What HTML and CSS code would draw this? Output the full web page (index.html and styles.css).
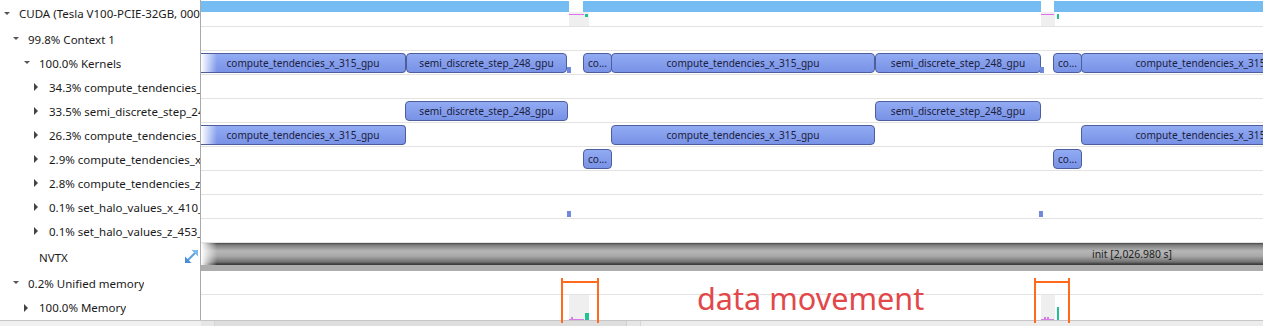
FILE: index.html
```html
<!DOCTYPE html>
<html lang="en">
<head>
    <meta charset="UTF-8">
    <meta name="viewport" content="width=device-width, initial-scale=1.0">
    <title>Timeline View</title>
    <link rel="stylesheet" href="styles.css">
</head>
<body>
    <div class="view">
        <!-- Row tree on the left -->
        <div class="tree">
            <div class="tree-row row-first lvl0"><span class="caret open"></span><span class="label">CUDA (Tesla V100-PCIE-32GB, 0000:00:05.0)</span></div>
            <div class="tree-row lvl1"><span class="caret open"></span><span class="label">99.8% Context 1</span></div>
            <div class="tree-row lvl2"><span class="caret open"></span><span class="label">100.0% Kernels</span></div>
            <div class="tree-row lvl3"><span class="caret"></span><span class="label">34.3% compute_tendencies_z_383_gpu</span></div>
            <div class="tree-row lvl3"><span class="caret"></span><span class="label">33.5% semi_discrete_step_248_gpu</span></div>
            <div class="tree-row lvl3"><span class="caret"></span><span class="label">26.3% compute_tendencies_x_315_gpu</span></div>
            <div class="tree-row lvl3"><span class="caret"></span><span class="label">2.9% compute_tendencies_x_346_gpu</span></div>
            <div class="tree-row lvl3"><span class="caret"></span><span class="label">2.8% compute_tendencies_z_414_gpu</span></div>
            <div class="tree-row lvl3"><span class="caret"></span><span class="label">0.1% set_halo_values_x_410_gpu</span></div>
            <div class="tree-row lvl3"><span class="caret"></span><span class="label">0.1% set_halo_values_z_453_gpu</span></div>
            <div class="tree-row row-nvtx lvl2">
                <span class="caret none"></span><span class="label">NVTX</span>
                <svg class="expand-icon" width="15" height="15" viewBox="0 0 15 15">
                    <path d="M3.5 11.5 L11.5 3.5" stroke="#5b9fe0" stroke-width="2"/>
                    <path d="M1 14 L1 7.5 L7.5 14 Z" fill="#4a8fd6"/>
                    <path d="M14 1 L14 7.5 L7.5 1 Z" fill="#7db8ee"/>
                </svg>
            </div>
            <div class="tree-row lvl1"><span class="caret open"></span><span class="label">0.2% Unified memory</span></div>
            <div class="tree-row row-last lvl2"><span class="caret"></span><span class="label">100.0% Memory</span></div>
        </div>

        <!-- Timeline canvas -->
        <div class="timeline">
            <div class="track track-first">
                <div class="gpu-bar" style="left:0;width:368px"></div>
                <div class="gpu-bar" style="left:382px;width:458px"></div>
                <div class="gpu-bar" style="left:853px;width:420px"></div>
                <div class="idle" style="left:368px;width:20px"></div>
                <div class="idle" style="left:840px;width:14px"></div>
                <div class="htod" style="left:368px;width:15px"></div>
                <div class="htod" style="left:840px;width:13px"></div>
                <div class="dtoh" style="left:384px;height:3px"></div>
                <div class="dtoh thin" style="left:856px;height:5px"></div>
            </div>
            <div class="track"></div>
            <div class="track">
                <div class="k clip-left" style="left:0;width:205px">compute_tendencies_x_315_gpu</div>
                <div class="k" style="left:205px;width:161px">semi_discrete_step_248_gpu</div>
                <div class="tick" style="left:366px"></div>
                <div class="k" style="left:382px;width:29px">co...</div>
                <div class="k" style="left:410px;width:264px">compute_tendencies_x_315_gpu</div>
                <div class="k" style="left:674px;width:166px">semi_discrete_step_248_gpu</div>
                <div class="tick" style="left:839px"></div>
                <div class="k" style="left:852px;width:29px">co...</div>
                <div class="k" style="left:880px;width:262px">compute_tendencies_x_315_gpu</div>
            </div>
            <div class="track"></div>
            <div class="track">
                <div class="k" style="left:204px;width:163px">semi_discrete_step_248_gpu</div>
                <div class="k" style="left:674px;width:166px">semi_discrete_step_248_gpu</div>
            </div>
            <div class="track">
                <div class="k clip-left" style="left:0;width:205px">compute_tendencies_x_315_gpu</div>
                <div class="k" style="left:410px;width:264px">compute_tendencies_x_315_gpu</div>
                <div class="k" style="left:880px;width:262px">compute_tendencies_x_315_gpu</div>
            </div>
            <div class="track">
                <div class="k" style="left:382px;width:29px">co...</div>
                <div class="k" style="left:852px;width:29px">co...</div>
            </div>
            <div class="track"></div>
            <div class="track">
                <div class="tick" style="left:366px"></div>
                <div class="tick" style="left:838px"></div>
            </div>
            <div class="track"></div>
            <div class="track track-nvtx">
                <div class="nvtx-bar"><span class="nvtx-label">init [2,026.980 s]</span></div>
                <div class="nvtx-band"></div>
            </div>
            <div class="track"></div>
            <div class="track track-last">
                <div class="idle" style="left:368px;width:20px;top:0;height:25px"></div>
                <div class="idle" style="left:840px;width:14px;top:0;height:25px"></div>
                <div class="mem-line" style="left:368px;width:15px"></div>
                <div class="mem-line" style="left:840px;width:13px"></div>
                <div class="mem-dot" style="left:370px"></div>
                <div class="mem-dot" style="left:843px"></div>
                <div class="mem-dot" style="left:846px"></div>
                <div class="mem-green" style="left:384px;width:4px;height:7px"></div>
                <div class="mem-green" style="left:856px;width:2px;height:13px"></div>
            </div>

            <!-- annotation drawn on top of the capture -->
            <div class="bracket" style="left:360px;width:38px"></div>
            <div class="bracket" style="left:833px;width:36px"></div>
            <div class="note">data movement</div>
        </div>
    </div>

    <div class="hscroll">
        <div class="hscroll-tree"></div>
        <div class="hscroll-btn"></div>
        <div class="hscroll-thumb"></div>
        <div class="hscroll-btn"></div>
        <div class="hscroll-track"></div>
    </div>
</body>
</html>
```

FILE: styles.css
```css
/* General Reset */
* {
    margin: 0;
    padding: 0;
    box-sizing: border-box;
}

body {
    width: 1263px;
    height: 326px;
    overflow: hidden;
    background-color: #ffffff;
    font-family: 'Noto Sans', 'Open Sans', sans-serif;
    color: #1a1a1a;
}

.view {
    display: flex;
    height: 321px;
    border-bottom: 1px solid #c6c6c6;
}

/* Left tree */
.tree {
    flex: none;
    width: 201px;
    border-right: 1px solid #a9a9a9;
    overflow: hidden;
}

.tree-row {
    display: flex;
    align-items: center;
    height: 24px;
    font-size: 11.5px;
    white-space: nowrap;
    overflow: hidden;
}

.label {
    overflow: hidden;
}

.row-first {
    height: 27px;
}

.row-nvtx {
    height: 28px;
    position: relative;
}

.row-last {
    height: 25px;
}

.lvl0 { padding-left: 3px; }
.lvl1 { padding-left: 12px; }
.lvl2 { padding-left: 23px; }
.lvl3 { padding-left: 33px; }

.caret {
    flex: none;
    width: 16px;
    height: 10px;
    position: relative;
}

/* collapsed: small right triangle */
.caret::before {
    content: '';
    position: absolute;
    left: 1px;
    top: 1px;
    border-top: 4px solid transparent;
    border-bottom: 4px solid transparent;
    border-left: 4px solid #444444;
}

/* expanded: small down triangle */
.caret.open::before {
    left: 1px;
    top: 3px;
    border-left: 3px solid transparent;
    border-right: 3px solid transparent;
    border-top: 3px solid #555555;
    border-bottom: none;
}

.caret.none::before {
    display: none;
}

.expand-icon {
    position: absolute;
    left: 184px;
    top: 6px;
}

/* Timeline */
.timeline {
    flex: 1;
    position: relative;
}

.track {
    position: relative;
    height: 24px;
    border-bottom: 1px solid #e3e3e3;
    overflow: hidden;
}

.track-first {
    height: 27px;
}

.track-nvtx {
    height: 28px;
    border-bottom: none;
}

.track-last {
    height: 25px;
    border-bottom: none;
}

.gpu-bar {
    position: absolute;
    top: 1px;
    height: 11px;
    background-color: #74bcf2;
}

.idle {
    position: absolute;
    top: 12px;
    height: 14px;
    background-color: #efefef;
}

.htod {
    position: absolute;
    top: 14px;
    height: 1px;
    background-color: #e46ef0;
}

.dtoh {
    position: absolute;
    top: 14px;
    width: 3px;
    background-color: #1fc294;
}

.dtoh.thin {
    width: 2px;
}

/* Kernel boxes */
.k {
    position: absolute;
    top: 2px;
    height: 20px;
    border: 1px solid #4c5e9c;
    border-radius: 4px;
    background: linear-gradient(#92abf3, #7892e6);
    color: #1b2040;
    font-size: 10.1px;
    line-height: 18px;
    text-align: center;
    white-space: nowrap;
    overflow: hidden;
}

.k.clip-left {
    border-left: none;
    border-radius: 0 4px 4px 0;
    background: linear-gradient(90deg, #ffffff 0, rgba(255, 255, 255, 0) 16px), linear-gradient(#92abf3, #7892e6);
}

.tick {
    position: absolute;
    top: 16px;
    width: 4px;
    height: 6px;
    background-color: #6f89db;
}

/* NVTX range */
.nvtx-bar {
    position: relative;
    height: 22px;
    background: linear-gradient(#464646 0, #7c7c7c 2px, #b6b6b6 8px, #a9a9a9 13px, #727272 19px, #3e3e3e 21px);
}

.nvtx-bar::before {
    content: '';
    position: absolute;
    left: 0;
    top: 0;
    width: 16px;
    height: 100%;
    background: linear-gradient(90deg, #ffffff, rgba(255, 255, 255, 0));
}

.nvtx-label {
    position: absolute;
    left: 891px;
    top: 3px;
    font-size: 10.4px;
    line-height: 16px;
    color: #202020;
}

.nvtx-band {
    height: 6px;
    background-color: #adadad;
}

/* Unified memory row */
.mem-line {
    position: absolute;
    bottom: 0;
    height: 1px;
    background-color: #d77de6;
}

.mem-dot {
    position: absolute;
    bottom: 0;
    width: 2px;
    height: 3px;
    background-color: #d77de6;
}

.mem-green {
    position: absolute;
    bottom: 0;
    background-color: #1fc294;
}

/* Annotation */
.bracket {
    position: absolute;
    top: 278px;
    height: 45px;
    border-left: 2px solid #ff6a1c;
    border-right: 2px solid #ff6a1c;
    z-index: 2;
}

.bracket::before {
    content: '';
    position: absolute;
    left: 0;
    right: 0;
    top: 3px;
    height: 2px;
    background-color: #ff6a1c;
}

.note {
    position: absolute;
    left: 496px;
    top: 282px;
    font-size: 30.6px;
    line-height: 32px;
    color: #e2474a;
    white-space: nowrap;
}

/* Horizontal scroll bar */
.hscroll {
    display: flex;
    height: 5px;
    background-color: #ececec;
}

.hscroll-tree {
    width: 201px;
    background-color: #f0f0f0;
}

.hscroll-btn {
    width: 14px;
    background-color: #e6e6e6;
    border-right: 1px solid #d6d6d6;
}

.hscroll-thumb {
    width: 412px;
    background-color: #dedede;
    border-right: 1px solid #d0d0d0;
}

.hscroll-track {
    flex: 1;
}
```
